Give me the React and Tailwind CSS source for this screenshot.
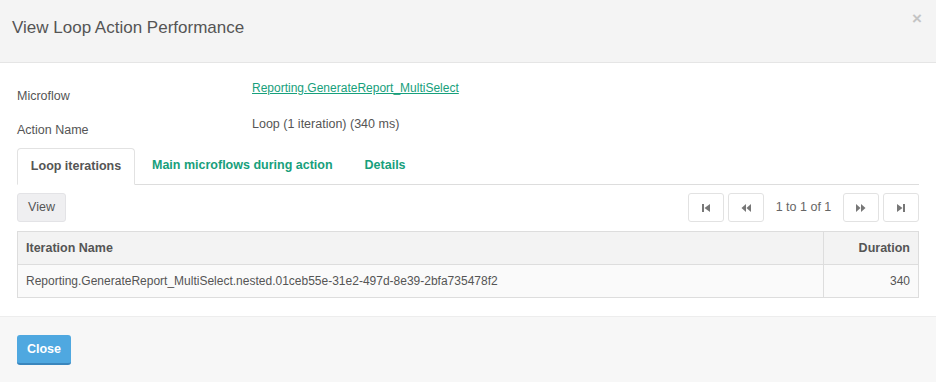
import React from "react";

const font = { fontFamily: '"Liberation Sans", Arial, sans-serif' };

const PagerIcon = ({ kind }) => {
  const shapes = {
    first: (
      <>
        <rect x="1" y="1" width="2" height="8" />
        <path d="M9 1 L3.5 5 L9 9 Z" />
      </>
    ),
    prev: (
      <>
        <path d="M5 1 L0.5 5 L5 9 Z" />
        <path d="M10 1 L5.5 5 L10 9 Z" />
      </>
    ),
    next: (
      <>
        <path d="M0 1 L4.5 5 L0 9 Z" />
        <path d="M5 1 L9.5 5 L5 9 Z" />
      </>
    ),
    last: (
      <>
        <path d="M1 1 L6.5 5 L1 9 Z" />
        <rect x="7" y="1" width="2" height="8" />
      </>
    ),
  };
  return (
    <svg width="10" height="10" viewBox="0 0 10 10" className="fill-[#777]">
      {shapes[kind]}
    </svg>
  );
};

const PagerButton = ({ kind }) => (
  <button className="flex h-[29px] w-[36px] items-center justify-center rounded-[3px] border border-[#e2e2e2] bg-white">
    <PagerIcon kind={kind} />
  </button>
);

export default function App() {
  return (
    <div className="h-[382px] w-[936px] overflow-hidden bg-white text-[12.5px] text-[#555]" style={font}>
      {/* Header */}
      <div className="flex h-[63px] items-start justify-between border-b border-[#e5e5e5] bg-[#f4f4f4] px-3">
        <h4 className="pt-[18px] text-[17px] leading-[20px] text-[#555]">View Loop Action Performance</h4>
        <span className="pt-[9px] pr-[2px] text-[17px] font-bold leading-[20px] text-[#c4c4c4]">×</span>
      </div>

      {/* Body */}
      <div className="h-[253px] px-[17px] pt-[17px]">
        <div className="grid grid-cols-[235px_1fr]">
          <div className="pt-[8px] leading-[16px]">Microflow</div>
          <div className="leading-[16px]">
            <a className="text-[12px] text-[#17a07c] underline">Reporting.GenerateReport_MultiSelect</a>
          </div>
          <div className="pt-[18px] leading-[16px]">Action Name</div>
          <div className="pt-[18px] leading-[16px]">
            <span className="relative top-[-6px]">Loop (1 iteration) (340 ms)</span>
          </div>
        </div>

        {/* Tabs */}
        <div className="mt-[10px] flex h-[37px] items-end border-b border-[#ddd]">
          <div className="-mb-px flex h-[37px] w-[118px] items-center justify-center rounded-t-[4px] border border-b-white border-[#e2e2e2] bg-white font-bold text-[#555]">
            Loop iterations
          </div>
          <div className="flex h-[37px] items-center px-[17px] font-bold text-[#17a07c]">
            Main microflows during action
          </div>
          <div className="flex h-[37px] items-center px-[15px] font-bold text-[#17a07c]">Details</div>
        </div>

        {/* Toolbar */}
        <div className="mt-[8px] flex items-center justify-between">
          <button className="h-[29px] w-[49px] rounded-[3px] border border-[#e3e3e6] bg-[#efeff1] text-[12.5px] text-[#555]">
            View
          </button>
          <div className="flex items-center">
            <PagerButton kind="first" />
            <div className="ml-[4px]">
              <PagerButton kind="prev" />
            </div>
            <span className="w-[79px] text-center text-[#666]">1 to 1 of 1</span>
            <PagerButton kind="next" />
            <div className="ml-[4px]">
              <PagerButton kind="last" />
            </div>
          </div>
        </div>

        {/* Table */}
        <table className="mt-[9px] w-full border-collapse border border-[#ddd]">
          <thead>
            <tr className="h-[33px] bg-[#f3f3f3]">
              <th className="border border-[#ddd] px-[8px] text-left font-bold text-[#555]">Iteration Name</th>
              <th className="w-[95px] border border-[#ddd] px-[8px] text-right font-bold text-[#555]">Duration</th>
            </tr>
          </thead>
          <tbody>
            <tr className="h-[33px] bg-[#fafafa]">
              <td className="border border-[#ddd] px-[8px] text-[12px]">
                Reporting.GenerateReport_MultiSelect.nested.01ceb55e-31e2-497d-8e39-2bfa735478f2
              </td>
              <td className="border border-[#ddd] px-[8px] text-right text-[12px]">340</td>
            </tr>
          </tbody>
        </table>
      </div>

      {/* Footer */}
      <div className="h-[66px] border-t border-[#ededed] bg-[#f7f7f7] px-[17px] pt-[18px]">
        <button className="h-[30px] w-[54px] rounded-[3px] border-b-2 border-[#3a86bd] bg-[#4fa8e0] font-bold text-white">
          Close
        </button>
      </div>
    </div>
  );
}
